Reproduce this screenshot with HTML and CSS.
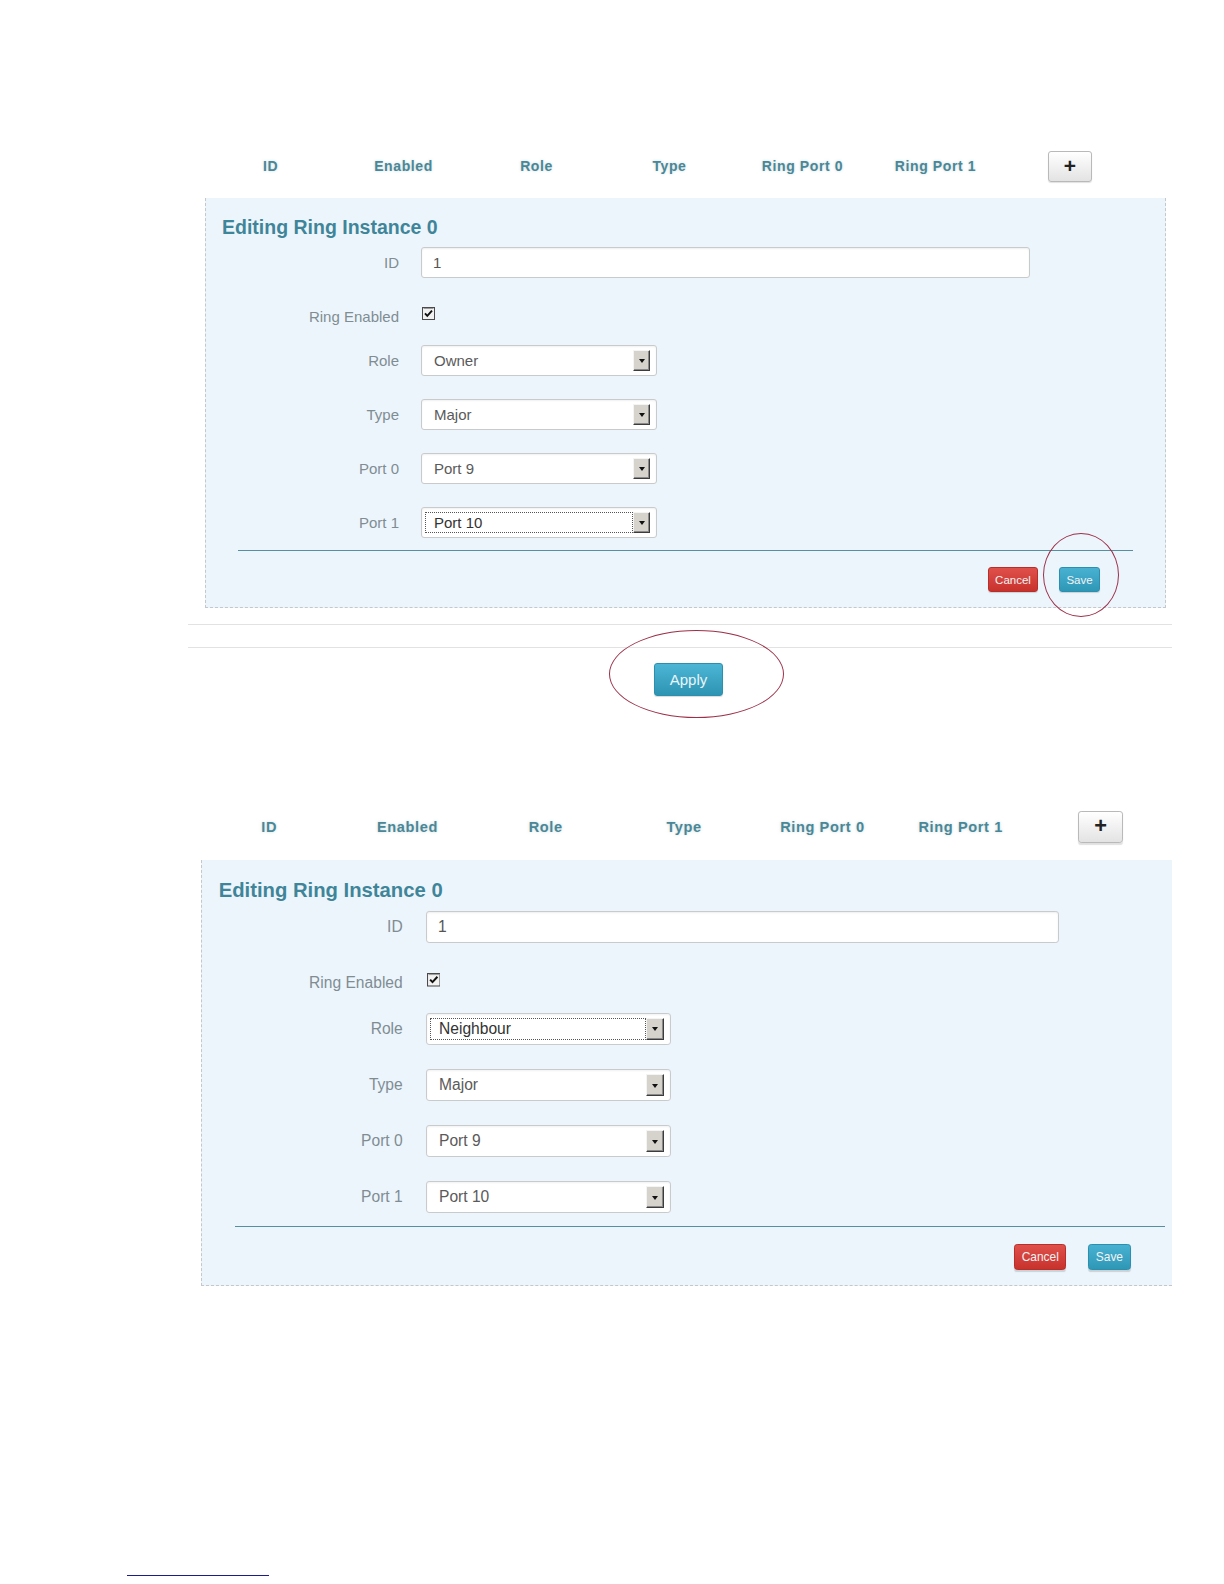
FILE: index.html
```html
<!DOCTYPE html>
<html lang="en">
<head>
<meta charset="utf-8">
<title>Ring Instance</title>
<link rel="stylesheet" href="styles.css">
</head>
<body>
<div class="page">

  <section class="block block--first">
    <div class="block-inner">
      <div class="table-head">
        <div class="th">ID</div>
        <div class="th">Enabled</div>
        <div class="th">Role</div>
        <div class="th">Type</div>
        <div class="th">Ring Port 0</div>
        <div class="th">Ring Port 1</div>
        <div class="th"><button class="btn-add" type="button">+</button></div>
      </div>
      <div class="panel">
        <h2 class="panel-title">Editing Ring Instance 0</h2>
        <div class="row row--id">
          <label class="lbl">ID</label>
          <div class="input">1</div>
        </div>
        <div class="row row--check">
          <label class="lbl">Ring Enabled</label>
          <span class="check"><svg width="13" height="13" viewBox="0 0 13 13"><rect x="0.5" y="0.5" width="12" height="12" fill="#f2f2f2" stroke="#4a4a4a"/><path d="M1.5 1.5H11.5" stroke="#9a9a9a"/><path d="M3 6.3 L5.3 8.8 L10 3.6" fill="none" stroke="#111" stroke-width="1.9"/></svg></span>
        </div>
        <div class="row">
          <label class="lbl">Role</label>
          <div class="select"><span class="sel-text">Owner</span><span class="sel-btn"><i></i></span></div>
        </div>
        <div class="row">
          <label class="lbl">Type</label>
          <div class="select"><span class="sel-text">Major</span><span class="sel-btn"><i></i></span></div>
        </div>
        <div class="row">
          <label class="lbl">Port 0</label>
          <div class="select"><span class="sel-text">Port 9</span><span class="sel-btn"><i></i></span></div>
        </div>
        <div class="row row--last">
          <label class="lbl">Port 1</label>
          <div class="select"><span class="sel-text sel-text--focus">Port 10</span><span class="sel-btn"><i></i></span></div>
        </div>
        <div class="divider"></div>
        <div class="actions">
          <button class="btn btn-cancel" type="button">Cancel</button>
          <button class="btn btn-save" type="button">Save</button>
        </div>
      </div>
    </div>
  </section>

  <div class="sep"></div>
  <div class="sep sep--second"></div>
  <div class="apply-bar"><button class="btn-apply" type="button">Apply</button></div>

  <section class="block block--second">
    <div class="block-inner block-inner--zoom">
      <div class="table-head">
        <div class="th">ID</div>
        <div class="th">Enabled</div>
        <div class="th">Role</div>
        <div class="th">Type</div>
        <div class="th">Ring Port 0</div>
        <div class="th">Ring Port 1</div>
        <div class="th"><button class="btn-add" type="button">+</button></div>
      </div>
      <div class="panel panel--cropped">
        <h2 class="panel-title">Editing Ring Instance 0</h2>
        <div class="row row--id">
          <label class="lbl">ID</label>
          <div class="input">1</div>
        </div>
        <div class="row row--check">
          <label class="lbl">Ring Enabled</label>
          <span class="check"><svg width="13" height="13" viewBox="0 0 13 13"><rect x="0.5" y="0.5" width="12" height="12" fill="#f2f2f2" stroke="#4a4a4a"/><path d="M1.5 1.5H11.5" stroke="#9a9a9a"/><path d="M3 6.3 L5.3 8.8 L10 3.6" fill="none" stroke="#111" stroke-width="1.9"/></svg></span>
        </div>
        <div class="row">
          <label class="lbl">Role</label>
          <div class="select"><span class="sel-text sel-text--focus">Neighbour</span><span class="sel-btn"><i></i></span></div>
        </div>
        <div class="row">
          <label class="lbl">Type</label>
          <div class="select"><span class="sel-text">Major</span><span class="sel-btn"><i></i></span></div>
        </div>
        <div class="row">
          <label class="lbl">Port 0</label>
          <div class="select"><span class="sel-text">Port 9</span><span class="sel-btn"><i></i></span></div>
        </div>
        <div class="row row--last">
          <label class="lbl">Port 1</label>
          <div class="select"><span class="sel-text">Port 10</span><span class="sel-btn"><i></i></span></div>
        </div>
        <div class="divider"></div>
        <div class="actions">
          <button class="btn btn-cancel" type="button">Cancel</button>
          <button class="btn btn-save" type="button">Save</button>
        </div>
      </div>
    </div>
  </section>

  <div class="footnote-rule"></div>

  <span class="mark mark--save"></span>
  <span class="mark mark--apply"></span>
</div>
</body>
</html>
```

FILE: styles.css
```css
html, body {
  margin: 0;
  padding: 0;
  background: #ffffff;
}

.page {
  position: relative;
  width: 1224px;
  height: 1584px;
  overflow: hidden;
  font-family: "Liberation Sans", Arial, sans-serif;
}

/* ---------- blocks ---------- */
.block--first {
  margin-left: 205px;
  padding-top: 148px;
}

.block--second {
  margin-left: 201px;
  margin-top: 112px;
}

.block-inner--zoom {
  zoom: 1.04;
}

/* ---------- table header ---------- */
.table-head {
  display: grid;
  grid-template-columns: repeat(7, 133px);
  height: 36px;
  align-items: center;
  margin-left: -1px;
  margin-bottom: 14px;
}

.th {
  text-align: center;
  font-weight: bold;
  font-size: 14px;
  letter-spacing: 0.6px;
  color: #4a8796;
  text-shadow: 0 0 3px rgba(110, 150, 160, 0.35);
}

.th:last-child {
  padding-left: 3px;
}

.btn-add {
  width: 44px;
  height: 31px;
  border: 1px solid #b9b9b9;
  border-radius: 3px;
  background: linear-gradient(#ffffff, #e3e3e3);
  box-shadow: 0 1px 1px rgba(0, 0, 0, 0.12);
  font-family: "Liberation Sans", Arial, sans-serif;
  font-weight: bold;
  font-size: 21px;
  line-height: 1;
  color: #222;
  padding: 0 0 2px 0;
  text-shadow: none;
}

/* ---------- panel ---------- */
.panel {
  width: 911px;
  background: #edf5fc;
  border-left: 1px dashed #c4c8cc;
  border-right: 1px dashed #c4c8cc;
  border-bottom: 1px dashed #c4c8cc;
  padding: 17px 32px 15px 16px;
}

.panel--cropped {
  width: 910px;
  border-right: none;
  padding-right: 7px;
}

.panel-title {
  margin: 0 0 8px 0;
  font-size: 19.5px;
  line-height: 24px;
  font-weight: bold;
  color: #3f8599;
}

.row {
  display: grid;
  grid-template-columns: 177px 1fr;
  column-gap: 22px;
  align-items: center;
  height: 31px;
  margin-bottom: 23px;
}

.row--id {
  margin-bottom: 19px;
}

.row--check {
  align-items: start;
  height: 35px;
  margin-bottom: 13px;
}

.row--last {
  margin-bottom: 0;
}

.lbl {
  text-align: right;
  font-size: 15px;
  color: #7f8d93;
}

.row--check .lbl {
  line-height: 31px;
  padding-top: 4px;
}

.check {
  display: block;
  width: 13px;
  height: 13px;
  margin-top: 10px;
  margin-left: 1px;
}

.check svg {
  display: block;
}

.input {
  box-sizing: border-box;
  width: 609px;
  height: 31px;
  background: #ffffff;
  border: 1px solid #c8cacc;
  border-radius: 3px;
  box-shadow: inset 0 1px 2px rgba(0, 0, 0, 0.07);
  padding-left: 11px;
  font-size: 15px;
  line-height: 29px;
  color: #555;
}

.select {
  box-sizing: border-box;
  width: 236px;
  height: 31px;
  background: #ffffff;
  border: 1px solid #c8cacc;
  border-radius: 3px;
  box-shadow: inset 0 1px 2px rgba(0, 0, 0, 0.06);
  display: flex;
  align-items: center;
}

.sel-text {
  box-sizing: border-box;
  flex: 1;
  height: 21px;
  margin-left: 3px;
  padding-left: 8px;
  border: 1px dotted transparent;
  font-size: 15px;
  line-height: 19px;
  color: #5a5a5a;
}

.sel-text--focus {
  border-color: #555;
  color: #333;
}

.sel-btn {
  box-sizing: border-box;
  width: 17px;
  height: 21px;
  margin-right: 6px;
  background: #d6d3cc;
  border-top: 1px solid #f4f4f4;
  border-left: 1px solid #f4f4f4;
  border-right: 1px solid #3c3c3c;
  border-bottom: 1px solid #3c3c3c;
  box-shadow: inset -1px -1px 0 #8a8a8a;
  display: flex;
  align-items: center;
  justify-content: center;
}

.sel-btn i {
  display: block;
  width: 0;
  height: 0;
  border-left: 3.5px solid transparent;
  border-right: 3.5px solid transparent;
  border-top: 4px solid #111;
  margin-top: 1px;
}

.divider {
  height: 1px;
  background: #55909c;
  margin: 12px 0 16px 16px;
}

.actions {
  display: flex;
  justify-content: flex-end;
  gap: 21px;
  padding-right: 33px;
}

.btn {
  height: 25px;
  border-radius: 3px;
  font-family: "Liberation Sans", Arial, sans-serif;
  font-size: 11.5px;
  padding: 0;
  color: #f3f3f3;
  box-shadow: 0 1px 1px rgba(0, 0, 0, 0.15);
}

.btn-cancel {
  width: 50px;
  background: linear-gradient(#e0504b, #c8322d);
  border: 1px solid #b72f2a;
}

.btn-save {
  width: 41px;
  background: linear-gradient(#48b1d2, #2f97b6);
  border: 1px solid #2d8fae;
}

/* ---------- separators / apply ---------- */
.sep {
  margin: 16px 52px 0 188px;
  height: 1px;
  background: #e2e2e2;
}

.sep--second {
  margin-top: 22px;
}

.apply-bar {
  margin: 15px 52px 0 188px;
  padding-left: 17px;
  display: flex;
  justify-content: center;
}

.btn-apply {
  width: 69px;
  height: 33px;
  border-radius: 3px;
  border: 1px solid #2d8fae;
  background: linear-gradient(#4cb5d5, #2e94b3);
  box-shadow: 0 1px 1px rgba(0, 0, 0, 0.15);
  font-family: "Liberation Sans", Arial, sans-serif;
  font-size: 15px;
  color: #e9f5f9;
  padding: 0;
}

/* ---------- footnote ---------- */
.footnote-rule {
  position: absolute;
  left: 127px;
  top: 1575px;
  width: 142px;
  height: 1px;
  background: #1c1c8a;
}

/* ---------- hand-drawn annotation marks ---------- */
.mark {
  position: absolute;
  border: 1px solid #9c3049;
  border-radius: 50%;
}

.mark--save {
  left: 1043px;
  top: 533px;
  width: 74px;
  height: 82px;
}

.mark--apply {
  left: 609px;
  top: 630px;
  width: 173px;
  height: 86px;
}
```
